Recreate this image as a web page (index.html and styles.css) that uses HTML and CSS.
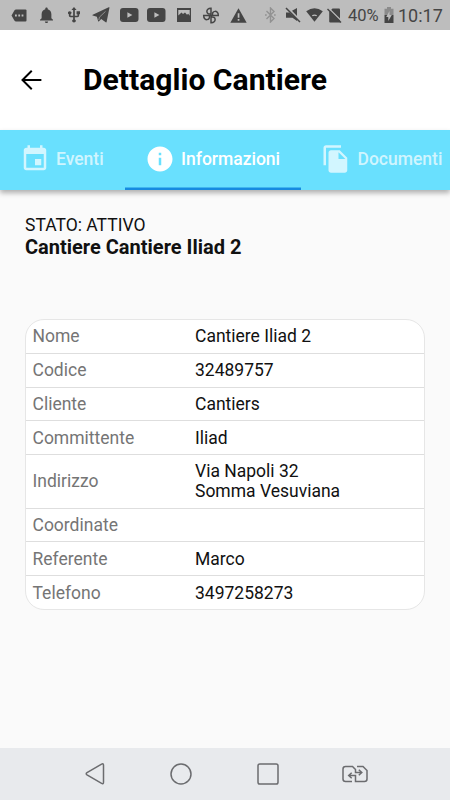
FILE: index.html
```html
<!DOCTYPE html>
<html lang="it">
<head>
<meta charset="utf-8">
<title>Dettaglio Cantiere</title>
<link rel="stylesheet" href="styles.css">
</head>
<body>
<div class="screen">
  <div class="status">
    <svg class="i-msg" width="16" height="13" viewBox="0 0 16 13"><path fill="currentColor" d="M5 .5H14.500Q15.500 .5 15.500 1.500V11.500Q15.500 12.500 14.500 12.500H5Q4 12.500 3.400 11.600L.5 6.500 3.400 1.400Q4 .5 5 .5Z"/><path fill="#bdbdbd" d="M4 5.600h1.800v1.800H4zM7.300 5.600h1.800v1.800H7.300zM10.600 5.600h1.800v1.800h-1.800z"/></svg>
    <svg class="i-bell" width="13" height="16" viewBox="4 2 16 20" preserveAspectRatio="none"><path fill="currentColor" d="M12 22c1.100 0 2-.9 2-2h-4c0 1.100.9 2 2 2zm6-6v-5c0-3.070-1.640-5.640-4.500-6.320V4c0-.83-.67-1.500-1.500-1.500s-1.500.67-1.500 1.500v.68C7.630 5.360 6 7.920 6 11v5l-2 2v1h16v-1l-2-2z"/></svg>
    <svg class="i-usb" width="12" height="16" viewBox="5 1 14 22" preserveAspectRatio="none"><path fill="currentColor" d="M15 7v4h1v2h-3V5h2l-3-4-3 4h2v8H8v-2.070c.7-.37 1.200-1.080 1.200-1.930 0-1.210-.99-2.200-2.200-2.200S4.800 7.790 4.800 9c0 .85.5 1.560 1.200 1.930V13c0 1.110.89 2 2 2h3v3.050c-.71.37-1.200 1.100-1.200 1.950 0 1.220.99 2.200 2.200 2.200s2.200-.98 2.200-2.200c0-.85-.49-1.580-1.200-1.950V15h3c1.110 0 2-.89 2-2v-2h1V7h-4z"/></svg>
    <svg class="i-tg" width="18" height="16" viewBox="0 0 18 16"><path fill="currentColor" d="M17.500.6 14.600 15q-.2.700-.9.300L9.200 12 7 14.200q-.7.600-.9-.3L4.900 9.700.7 8.400q-.8-.3 0-.7L16.700.3q.9-.3.800.3z"/><path fill="none" stroke="#bdbdbd" stroke-width=".6" d="M13.500 4.400 7.400 10.200 6.800 13"/></svg>
    <svg class="i-yt" width="19" height="14" viewBox="0 0 19 14"><rect width="18.500" height="14" rx="3" fill="currentColor"/><path fill="#bdbdbd" d="M7.400 4.300 12.400 7l-5 2.700z"/></svg>
    <svg class="i-yt2" width="19" height="14" viewBox="0 0 19 14"><rect width="18.500" height="14" rx="3" fill="currentColor"/><path fill="#bdbdbd" d="M7.400 4.300 12.400 7l-5 2.700z"/></svg>
    <svg class="i-img" width="14" height="14" viewBox="0 0 14 14"><path fill="currentColor" fill-rule="evenodd" d="M0 0h14v14H0zM1.300 2v5.500l3.200-3L6 6l2-1.600 2 2.400 1.200-1 1.500 1.900V2z"/></svg>
    <svg class="i-fan" width="18" height="17" viewBox="0 0 18 17"><g fill="none" stroke="currentColor" stroke-width="1.500"><path id="p" d="M9 8.500V1.200C3.300 1 3.700 8.500 9 6.800"/><use href="#p" transform="rotate(90 9 8.500)"/><use href="#p" transform="rotate(180 9 8.500)"/><use href="#p" transform="rotate(270 9 8.500)"/></g></svg>
    <svg class="i-warn" width="17" height="15" viewBox="0 0 17 15"><path fill="currentColor" d="M8.500.3 16.700 14.700H.3z"/><path fill="#bdbdbd" d="M7.700 5.200h1.700v4.500H7.700zM7.700 11h1.700v1.700H7.700z"/></svg>
    <svg class="i-bt" width="11" height="16" viewBox="0 0 11 16"><path fill="none" stroke="#929292" stroke-width="1.400" d="M1.500 4 9 11.500 5.500 15V1L9 4.500 1.500 12M0 8h1.700M9 8h1.700"/></svg>
    <svg class="i-mute" width="16" height="16" viewBox="0 0 16 16"><path fill="currentColor" d="M1 5.500h3.500L12 12v2L7.500 10.800H1zM7 3.800 12 1v8z"/><path stroke="#bdbdbd" stroke-width="1" d="m2.300 1 13 13"/><path stroke="currentColor" stroke-width="1.500" d="m1 1 14 14"/></svg>
    <svg class="i-wifi" width="17" height="14" viewBox="0 0 17 14"><path fill="currentColor" d="M.2 3.200Q8.500-2.700 16.800 3.200L8.500 13.700z"/><path fill="#bdbdbd" d="M5.900 7.300Q8.500 5.500 11.100 7.300L10.300 8.300Q8.500 7.300 6.700 8.300z"/></svg>
    <svg class="i-sim" width="15" height="15" viewBox="0 0 15 15"><path fill="currentColor" d="M5.500.5H12q1 0 1 1v13H3.200q-1 0-1-1V4z"/><path stroke="#bdbdbd" stroke-width="1.300" d="m1.500 0 13.500 13.500"/><path stroke="currentColor" stroke-width="1.500" d="m.5 1 13.500 13.500"/></svg>
    <span class="pct">40%</span>
    <svg class="i-bat" width="10" height="16" viewBox="0 0 10 16"><path fill="#8b8b8b" d="M3 0h4v1.700h2.500V8H.5V1.700H3z"/><path fill="currentColor" d="M.5 8h9v8h-9z"/><path fill="#bdbdbd" d="M5.500 4 2.200 10h2.100v4l3.500-6H5.500z"/></svg>
    <span class="clock">10:17</span>
  </div>
  <header class="appbar">
    <svg class="back" width="30" height="30" viewBox="0 0 24 24"><path fill="none" stroke="#000" stroke-width="1.600" d="M20.300 12H5.300M12.600 4.600 5.200 12l7.400 7.400"/></svg>
    <h1 class="title">Dettaglio Cantiere</h1>
  </header>
  <nav class="tabs">
    <div class="tab events"><svg width="30" height="30" viewBox="0 0 24 24"><path fill="currentColor" d="M17 12h-5v5h5v-5zM16 1v2H8V1H6v2H5c-1.110 0-1.990.9-1.990 2L3 19c0 1.100.89 2 2 2h14c1.100 0 2-.9 2-2V5c0-1.100-.9-2-2-2h-1V1h-2zm3 18H5V8h14v11z"/></svg><span>Eventi</span></div>
    <div class="tab info active"><svg width="30" height="30" viewBox="0 0 24 24"><path fill="currentColor" d="M12 2C6.480 2 2 6.480 2 12s4.480 10 10 10 10-4.480 10-10S17.520 2 12 2zm1 15h-2v-6h2v6zm0-8h-2V7h2v2z"/></svg><span>Informazioni</span></div>
    <div class="tab docs"><svg width="30" height="30" viewBox="0 0 24 24"><path fill="currentColor" d="M16 1H4c-1.100 0-2 .9-2 2v14h2V3h12V1zm-1 4l6 6v10c0 1.100-.9 2-2 2H7.990C6.890 23 6 22.100 6 21l.01-14c0-1.100.89-2 1.990-2h7zm-1 7h5.500L14 6.500V12z"/></svg><span>Documenti</span></div>
  </nav>
  <main class="content">
    <p class="state">STATO: ATTIVO</p>
    <h2 class="site">Cantiere Cantiere Iliad 2</h2>
    <dl class="table">
      <div class="row"><dt>Nome</dt><dd>Cantiere Iliad 2</dd></div>
      <div class="row"><dt>Codice</dt><dd>32489757</dd></div>
      <div class="row"><dt>Cliente</dt><dd>Cantiers</dd></div>
      <div class="row"><dt>Committente</dt><dd>Iliad</dd></div>
      <div class="row"><dt>Indirizzo</dt><dd>Via Napoli 32<br>Somma Vesuviana</dd></div>
      <div class="row"><dt>Coordinate</dt><dd></dd></div>
      <div class="row"><dt>Referente</dt><dd>Marco</dd></div>
      <div class="row"><dt>Telefono</dt><dd>3497258273</dd></div>
    </dl>
  </main>
  <footer class="navbar">
    <svg class="n-back" width="20" height="22" viewBox="0 0 20 22"><path d="M16.600 1.100 2 9.600q-1.600 1.100 0 2.200L16.600 20.400q1.900.8 1.900-1.200V2.300q0-2-1.900-1.200z"/></svg>
    <svg class="n-home" width="22" height="22" viewBox="0 0 22 22"><circle cx="11" cy="11" r="10"/></svg>
    <svg class="n-recent" width="22" height="22" viewBox="0 0 22 22"><rect x="1" y="1" width="20" height="20" rx="1.800"/></svg>
    <svg class="n-switch" width="26" height="18" viewBox="0 0 26 18"><path d="M10 16.500H3.500Q1 16.500 1 14V4Q1 1.500 3.500 1.500H10.500L13.500 4.500V7.500H19.500M16.800 4.800 19.800 7.500 16.800 10.200M15 1.500H21L25 5.500V14Q25 16.500 22.500 16.500H13.500V10.500H7M9.700 7.800 6.700 10.500 9.700 13.200"/></svg>
  </footer>
</div>
</body>
</html>
```
FILE: styles.css
```css
* { box-sizing: border-box; }
body, h1, h2, p, dl, dt, dd { margin: 0; }
body { font-family: Roboto, "Liberation Sans", sans-serif; background: #fafafa; }
svg { display: block; flex: none; }
.screen { width: 450px; height: 800px; display: flex; flex-direction: column; overflow: hidden; }

.status { height: 30px; flex: none; display: flex; align-items: center; background: #bdbdbd; color: #454545; white-space: nowrap; }
.i-msg { margin-left: 11px; }
.i-bell { margin-left: 13px; }
.i-usb { margin-left: 15px; }
.i-tg { margin-left: 12px; }
.i-yt { margin-left: 10px; }
.i-yt2 { margin-left: 8px; }
.i-img { margin-left: 11px; }
.i-fan { margin-left: 11px; }
.i-warn { margin-left: 10px; }
.i-bt { margin-left: 18px; }
.i-mute { margin-left: 9px; }
.i-wifi { margin-left: 5px; }
.i-sim { margin-left: 4px; }
.pct { width: 35px; margin-left: 6px; font-size: 16.500px; line-height: 30px; padding-top: 1px; }
.i-bat { margin-left: 1px; }
.clock { margin-left: 4px; font-size: 18px; line-height: 30px; padding-top: 1px; }

.appbar { height: 100px; flex: none; display: flex; align-items: center; background: #fff; }
.back { margin-left: 16px; }
.title { margin-left: 37px; font-size: 30.100px; line-height: 40px; font-weight: 700; }

.tabs { height: 60px; flex: none; display: flex; background: #69e0fe; color: rgba(255,255,255,.7); box-shadow: 0 3px 5px rgba(0,0,0,.3); position: relative; }
.tab { display: flex; align-items: center; gap: 6px; flex: none; font-size: 17.500px; font-weight: 500; white-space: nowrap; padding-bottom: 2px; }
.events { width: 125px; padding-left: 20px; }
.info { width: 176px; padding-left: 20px; }
.docs { width: 149px; padding-left: 20px; }
.docs span { margin-left: .5px; }
.active { color: #fff; box-shadow: inset 0 -2.500px #168be0; }

.content { flex: 1; padding: 24px 25px 0; font-size: 17.500px; }
.state { font-size: 17.500px; line-height: 22px; color: #111; }
.site { font-size: 20px; line-height: 22px; font-weight: 700; color: #111; }
.table { margin-top: 61px; border: 1px solid #e6e6e6; border-radius: 19px; background: #fff; }
.row { display: flex; align-items: center; min-height: 33.750px; padding: 6.450px 0 6.300px 6.500px; border-bottom: 1px solid #dedede; line-height: 20px; }
.row:last-child { border-bottom: 0; min-height: 32.750px; }
.row dt { width: 162.500px; color: #757575; }
.row dd { color: #111; }

.navbar { height: 52px; flex: none; display: flex; align-items: center; background: #e8eaed; }
.navbar svg { fill: none; stroke: #6b6c6f; stroke-width: 1.500; }
.n-back { margin-left: 85px; }
.n-home { margin-left: 65px; }
.n-recent { margin-left: 65px; }
.n-switch { margin-left: 63px; }
```
